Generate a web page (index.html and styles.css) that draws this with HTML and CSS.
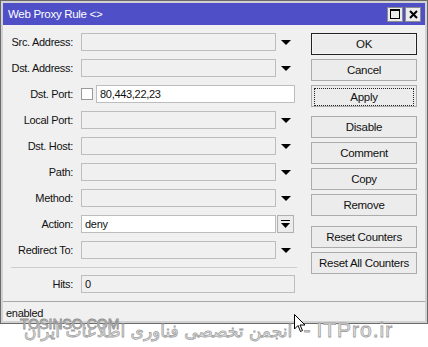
FILE: index.html
```html
<!DOCTYPE html>
<html lang="en">
<head>
    <meta charset="UTF-8">
    <title>Web Proxy Rule</title>
    <link rel="stylesheet" href="styles.css">
</head>
<body>
    <div class="window">
        <div class="titlebar">
            <span class="title">Web Proxy Rule &lt;&gt;</span>
            <div class="title-buttons">
                <span class="tbtn">
                    <svg width="10" height="10" viewBox="0 0 10 10"><rect x="0.5" y="0.5" width="9" height="9" fill="none" stroke="#000"/><line x1="0" y1="1.5" x2="10" y2="1.5" stroke="#000"/></svg>
                </span>
                <span class="tbtn">
                    <svg width="9" height="9" viewBox="0 0 9 9"><path d="M1 1 L8 8 M8 1 L1 8" stroke="#000" stroke-width="2"/></svg>
                </span>
            </div>
        </div>

        <div class="content">
            <div class="form">
                <div class="row">
                    <label>Src. Address:</label>
                    <div class="field"></div>
                    <span class="arrow"></span>
                </div>
                <div class="row">
                    <label>Dst. Address:</label>
                    <div class="field"></div>
                    <span class="arrow"></span>
                </div>
                <div class="row">
                    <label>Dst. Port:</label>
                    <span class="check"></span>
                    <div class="field white wide">80,443,22,23</div>
                </div>
                <div class="row">
                    <label>Local Port:</label>
                    <div class="field"></div>
                    <span class="arrow"></span>
                </div>
                <div class="row">
                    <label>Dst. Host:</label>
                    <div class="field"></div>
                    <span class="arrow"></span>
                </div>
                <div class="row">
                    <label>Path:</label>
                    <div class="field"></div>
                    <span class="arrow"></span>
                </div>
                <div class="row">
                    <label>Method:</label>
                    <div class="field"></div>
                    <span class="arrow"></span>
                </div>
                <div class="row">
                    <label>Action:</label>
                    <div class="field white">deny</div>
                    <span class="drop-btn">
                        <svg width="9" height="9" viewBox="0 0 9 9"><line x1="0" y1="0.5" x2="9" y2="0.5" stroke="#000"/><path d="M0 3 H9 L4.5 8 Z" fill="#000"/></svg>
                    </span>
                </div>
                <div class="row">
                    <label>Redirect To:</label>
                    <div class="field"></div>
                    <span class="arrow"></span>
                </div>
                <div class="sep"></div>
                <div class="row">
                    <label>Hits:</label>
                    <div class="field long">0</div>
                </div>
            </div>

            <div class="buttons">
                <div class="group">
                    <button class="btn default">OK</button>
                    <button class="btn">Cancel</button>
                    <button class="btn focus"><span>Apply</span></button>
                </div>
                <div class="group">
                    <button class="btn">Disable</button>
                    <button class="btn">Comment</button>
                    <button class="btn">Copy</button>
                    <button class="btn">Remove</button>
                </div>
                <div class="group">
                    <button class="btn">Reset Counters</button>
                    <button class="btn">Reset All Counters</button>
                </div>
            </div>
        </div>

        <div class="status">enabled</div>
    </div>

    <!-- video watermark over the bottom edge -->
    <div class="mark-site">TOSINSO.COM</div>
    <div class="mark-line"><span class="fa">انجمن تخصصی فناوری اطلاعات ایران</span> <span class="en">- ITPro.ir</span></div>
    <svg class="cursor" width="12" height="19" viewBox="0 0 12 19"><path d="M0.5 0.5 V15 L4 11.5 L6.5 17.5 L8.5 16.5 L6 11 H11 Z" fill="#fff" stroke="#000"/></svg>
</body>
</html>
```

FILE: styles.css
```css
body {
    margin: 0;
    background: #fff;
    font-family: "Liberation Sans", Arial, sans-serif;
    font-size: 11px;
    letter-spacing: -0.3px;
    color: #111;
}

.window {
    width: 428px;
    box-sizing: border-box;
    border: 1px solid #6a6a6a;
    padding: 2px;
    background: #d2d2d2;
}

.titlebar {
    height: 22px;
    background: #4f50c8;
    display: flex;
    align-items: center;
    justify-content: space-between;
    padding: 0 4px 0 5px;
}

.title {
    color: #fff;
    font-size: 11.5px;
}

.title-buttons {
    display: flex;
    gap: 2px;
}

.tbtn {
    width: 14px;
    height: 13px;
    background: #ececec;
    border: 1px solid #8c8c8c;
    display: flex;
    align-items: center;
    justify-content: center;
}

.content {
    display: flex;
    background: #f0f0f0;
    padding-top: 8px;
}

.form {
    width: 308px;
}

.row {
    display: flex;
    align-items: center;
    height: 18px;
    margin-bottom: 8px;
}

.row label {
    width: 70px;
    text-align: right;
    margin-right: 8px;
}

.field {
    width: 195px;
    height: 18px;
    box-sizing: border-box;
    border: 1px solid #bdbdbd;
    background: #f0f0f0;
    padding: 1px 3px;
    line-height: 15px;
}

.field.white {
    background: #fff;
}

.field.wide {
    width: 199px;
}

.field.long {
    width: 214px;
}

.arrow {
    width: 0;
    height: 0;
    margin-left: 5px;
    border-left: 5px solid transparent;
    border-right: 5px solid transparent;
    border-top: 5px solid #000;
}

.check {
    width: 12px;
    height: 12px;
    box-sizing: border-box;
    border: 1px solid #9a9a9a;
    background: #fff;
    margin-right: 3px;
}

.drop-btn {
    width: 17px;
    height: 18px;
    box-sizing: border-box;
    margin-left: 1px;
    border: 1px solid #b0b0b0;
    background: #ececec;
    display: flex;
    align-items: center;
    justify-content: center;
}

.sep {
    width: 286px;
    margin: 0 0 7px 8px;
    border-top: 1px solid #cdcdcd;
}

.buttons {
    width: 106px;
    display: flex;
    flex-direction: column;
    gap: 9px;
}

.group {
    display: flex;
    flex-direction: column;
    gap: 4px;
}

.group + .group + .group {
    margin-top: 1px;
}

.btn {
    height: 22px;
    box-sizing: border-box;
    border: 1px solid #acacac;
    background: #ececec;
    font-family: inherit;
    font-size: 11.5px;
    letter-spacing: -0.3px;
    color: #111;
    padding: 0;
}

.btn.default {
    border-color: #222;
    box-shadow: inset 0 0 0 1px #f5f5f5;
}

.btn.focus span {
    display: block;
    margin: 2px;
    height: 16px;
    line-height: 16px;
    border: 1px dotted #222;
}

.status {
    height: 20px;
    background: #f0f0f0;
    border-top: 1px solid #a8a8a8;
    padding: 5px 0 0 3px;
    box-sizing: border-box;
    line-height: 12px;
}

.mark-site {
    position: absolute;
    left: 20px;
    top: 316px;
    font-size: 14px;
    letter-spacing: 0;
    color: #e4e4e4;
    -webkit-text-stroke: 0.8px #8e8e8e;
}

.mark-line {
    position: absolute;
    left: 24px;
    top: 318px;
    white-space: nowrap;
    font-family: "DejaVu Sans", "Liberation Sans", sans-serif;
    letter-spacing: 0.5px;
    color: #eaeaea;
    -webkit-text-stroke: 0.8px #a2a2a2;
    direction: ltr;
}

.mark-line .fa {
    font-size: 17px;
}

.mark-line .en {
    margin-left: 8px;
    font-family: "Liberation Sans", sans-serif;
    font-size: 21px;
    letter-spacing: 1px;
}

.cursor {
    position: absolute;
    left: 294px;
    top: 314px;
}
```
